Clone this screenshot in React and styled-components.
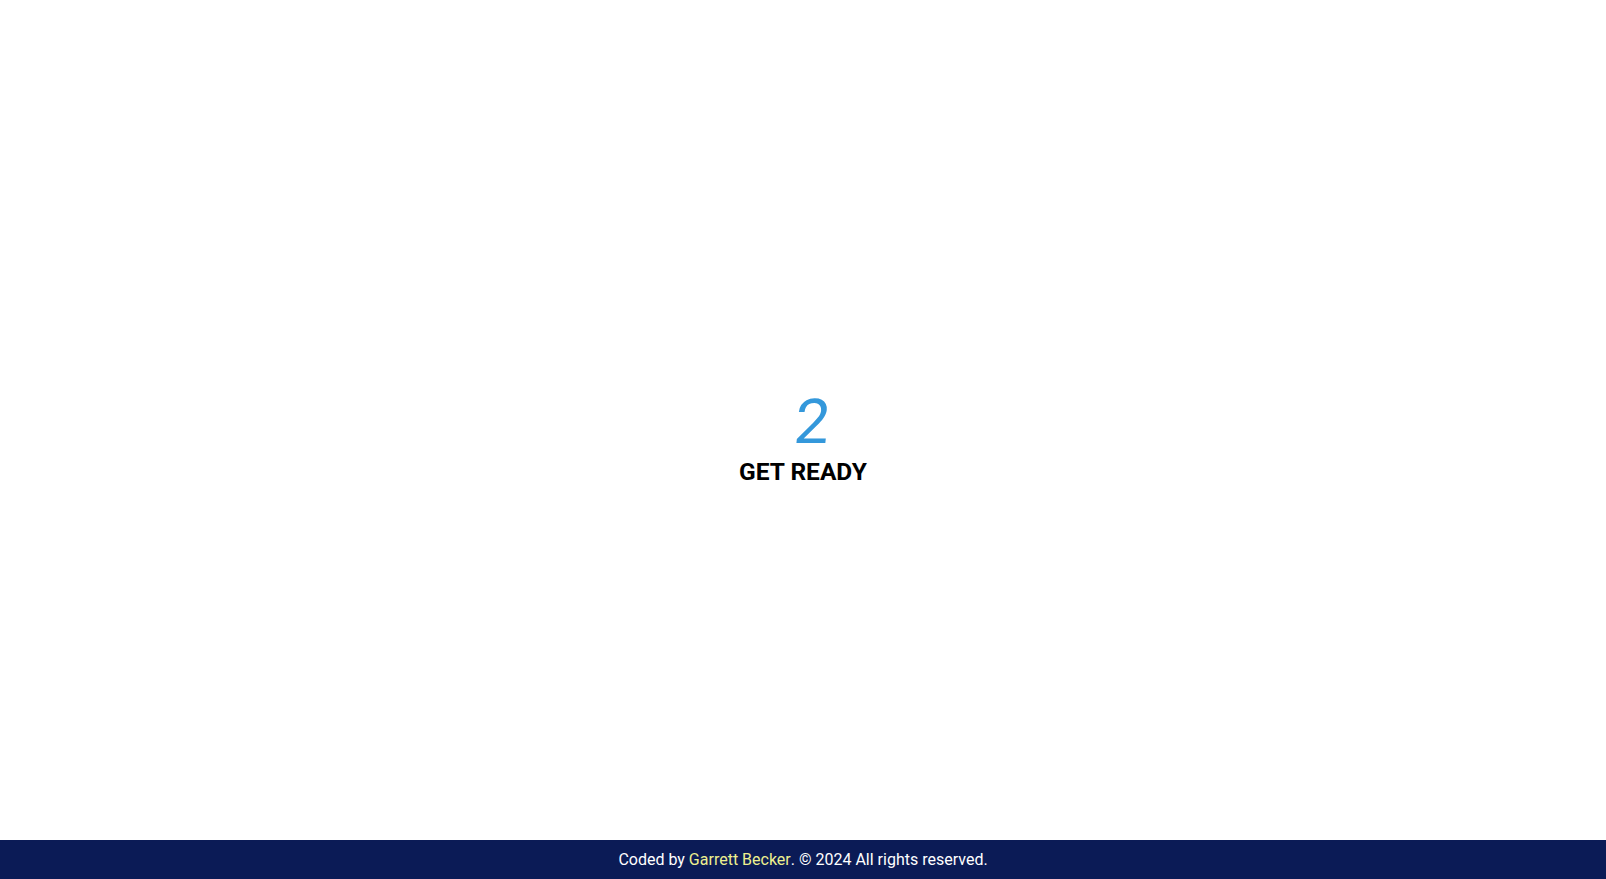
import React from "react";
import styled, { createGlobalStyle } from "styled-components";

const Global = createGlobalStyle`
  html, body { margin: 0; padding: 0; background: #fff; }
  body { font-family: Roboto, "Liberation Sans", sans-serif; }
`;

const Page = styled.div`
  display: flex;
  flex-direction: column;
  min-height: 100vh;
`;

const Main = styled.main`
  flex: 1;
  display: flex;
  flex-direction: column;
  align-items: center;
  justify-content: center;
  padding-top: 34px;
`;

const Count = styled.div`
  font-family: Roboto, sans-serif;
  font-weight: 400;
  font-size: 62px;
  line-height: 64px;
  color: #3498db;
  transform: translate(9px, 1px) skewX(-6deg);
`;

const Label = styled.h2`
  margin: 4px 0 0;
  font-family: Roboto, sans-serif;
  font-weight: 700;
  font-size: 24.5px;
  color: #000;
  letter-spacing: 0;
`;

const Footer = styled.footer`
  height: 39px;
  background: #0b1b56;
  color: #fff;
  display: flex;
  align-items: center;
  justify-content: center;
  font-size: 16px;
`;

const Link = styled.span`
  color: #eef08f;
`;

export default function App() {
  return (
    <Page>
      <Global />
      <Main>
        <Count>2</Count>
        <Label>GET READY</Label>
      </Main>
      <Footer>
        Coded by&nbsp;<Link>Garrett Becker</Link>. © 2024 All rights reserved.
      </Footer>
    </Page>
  );
}
